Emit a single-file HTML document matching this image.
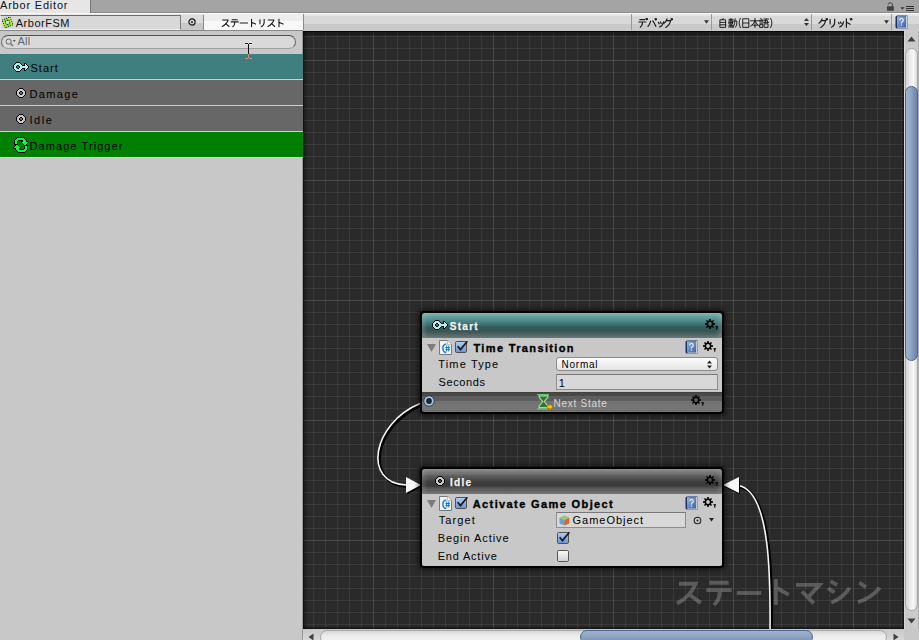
<!DOCTYPE html>
<html><head><meta charset="utf-8">
<style>
*{margin:0;padding:0;box-sizing:border-box}
html,body{width:919px;height:640px;overflow:hidden;background:#c8c8c8;font-family:"Liberation Sans",sans-serif;font-size:11px;color:#000}
.a{position:absolute}
svg{position:absolute;overflow:visible}
.t{position:absolute;white-space:nowrap;line-height:1}
</style></head><body>
<svg width="0" height="0" style="position:absolute">
<defs>
<symbol id="k_su" viewBox="0 0 100 100"><path d="M18 18H78Q68 55 14 88M52 56L88 88"/></symbol>
<symbol id="k_te" viewBox="0 0 100 100"><path d="M22 14H78M10 38H90M52 38Q52 72 28 92"/></symbol>
<symbol id="k_ch" viewBox="0 0 100 100"><path d="M8 50H92"/></symbol>
<symbol id="k_to" viewBox="0 0 100 100"><path d="M34 8V92M34 42L78 62"/></symbol>
<symbol id="k_ma" viewBox="0 0 100 100"><path d="M10 24H88Q72 52 50 68M40 48L72 88"/></symbol>
<symbol id="k_si" viewBox="0 0 100 100"><path d="M16 16L36 30M10 44L32 58M18 90Q66 74 90 22"/></symbol>
<symbol id="k_n" viewBox="0 0 100 100"><path d="M14 20L40 40M16 88Q66 74 90 24"/></symbol>
<symbol id="k_ri" viewBox="0 0 100 100"><path d="M26 14V58M72 10V45Q70 78 40 92"/></symbol>
<symbol id="k_de" viewBox="0 0 100 100"><path d="M18 16H68M8 40H80M46 40Q46 72 24 92M80 6L86 18M90 2L96 14"/></symbol>
<symbol id="k_ba" viewBox="0 0 100 100"><path d="M36 32Q30 62 10 84M58 28Q76 52 88 82M80 8L86 20M90 4L96 16"/></symbol>
<symbol id="k_xtu" viewBox="0 0 100 100"><path d="M24 44L32 58M44 40L52 54M76 38Q70 74 36 90"/></symbol>
<symbol id="k_gu" viewBox="0 0 100 100"><path d="M40 8Q34 34 10 52M34 26H76Q66 72 28 94M80 8L86 20M90 4L96 16"/></symbol>
<symbol id="k_do" viewBox="0 0 100 100"><path d="M34 8V92M34 42L72 62M72 8L78 20M84 4L90 16"/></symbol>
<symbol id="kj_ji" viewBox="0 0 100 100"><path d="M52 4L44 16M24 18H76V94H24ZM24 44H76M24 68H76"/></symbol>
<symbol id="kj_dou" viewBox="0 0 100 100"><path d="M10 14H50M30 6V90M14 28H46V60H14ZM14 44H46M10 74H50M6 90H54M56 30H90Q90 82 76 92M72 8Q72 66 50 94"/></symbol>
<symbol id="kj_po" viewBox="0 0 100 100"><path d="M34 2Q6 50 34 98"/></symbol>
<symbol id="kj_nichi" viewBox="0 0 100 100"><path d="M22 8H78V94H22ZM22 50H78"/></symbol>
<symbol id="kj_hon" viewBox="0 0 100 100"><path d="M6 28H94M50 4V96M50 30Q36 64 6 82M50 30Q64 64 94 82M28 72H72"/></symbol>
<symbol id="kj_go" viewBox="0 0 100 100"><path d="M14 8L30 14M6 24H42M10 38H38M10 52H38M12 66H38V94H12ZM50 10H94M70 10L62 40M56 26H86V42M48 44H96M56 58H90V94H56Z"/></symbol>
<symbol id="kj_pc" viewBox="0 0 100 100"><path d="M66 2Q94 50 66 98"/></symbol>

<linearGradient id="gchk" x1="0" y1="0" x2="0" y2="1"><stop offset="0" stop-color="#b4cdf0"/><stop offset="1" stop-color="#6a94d6"/></linearGradient>
<linearGradient id="gunchk" x1="0" y1="0" x2="0" y2="1"><stop offset="0" stop-color="#fafafa"/><stop offset="1" stop-color="#d0d0d0"/></linearGradient>
<symbol id="chk" viewBox="0 0 13 13"><rect x="0.5" y="0.5" width="11" height="11" rx="1.2" fill="url(#gchk)" stroke="#505050"/><path d="M2.6 5.2L5.5 8.6L12.4 0.2" fill="none" stroke="#151a22" stroke-width="1.7"/></symbol>
<symbol id="gear" viewBox="-6 -6 14 12"><g fill="#000"><path fill-rule="evenodd" d="M-3.4 0A3.4 3.4 0 1 0 3.4 0A3.4 3.4 0 1 0 -3.4 0ZM-1.9 0A1.9 1.9 0 1 1 1.9 0A1.9 1.9 0 1 1 -1.9 0Z"/><rect x="-0.8" y="-5" width="1.6" height="2.2" transform="rotate(0)"/><rect x="-0.8" y="-5" width="1.6" height="2.2" transform="rotate(45)"/><rect x="-0.8" y="-5" width="1.6" height="2.2" transform="rotate(90)"/><rect x="-0.8" y="-5" width="1.6" height="2.2" transform="rotate(135)"/><rect x="-0.8" y="-5" width="1.6" height="2.2" transform="rotate(180)"/><rect x="-0.8" y="-5" width="1.6" height="2.2" transform="rotate(225)"/><rect x="-0.8" y="-5" width="1.6" height="2.2" transform="rotate(270)"/><rect x="-0.8" y="-5" width="1.6" height="2.2" transform="rotate(315)"/><path d="M5 2.3H8.6L6.8 4.6Z"/><rect x="6.3" y="4" width="1" height="1.8"/></g></symbol>
<symbol id="csicon" viewBox="0 0 13 15"><path d="M0.5 0.5H8.7L12.5 4.3V14.5H0.5Z" fill="#eef3f8" stroke="#7a7a7a"/><path d="M8.5 0.5V4.5H12.5" fill="#fff" stroke="#9a9a9a" stroke-width="0.6"/><path d="M7.2 3.9A3.3 4.3 0 0 0 7.2 12.5" fill="none" stroke="#1b7cc2" stroke-width="1.5"/><path d="M6.5 7.5H11M6.5 9.5H11M7.7 5.5V11.5M9.7 5.5V11.5" stroke="#1b7cc2" stroke-width="1"/></symbol>
<linearGradient id="gbook" x1="0" y1="0" x2="1" y2="1"><stop offset="0" stop-color="#9ab8e4"/><stop offset="0.5" stop-color="#6a8cc4"/><stop offset="1" stop-color="#3e5f9c"/></linearGradient><symbol id="helpbook" viewBox="0 0 13 14"><path d="M0.5 2Q0.5 0.5 2.5 0.5H12.5V13.5H2.5Q0.5 13.5 0.5 12Z" fill="#1c3260"/><rect x="2" y="1.3" width="9.2" height="11.2" fill="url(#gbook)"/><path d="M11.2 1H12.3V13.2H2.5V12.5H11.2Z" fill="#e8ecf2"/><path d="M4.9 5.2A1.7 1.7 0 1 1 7.1 6.8Q6.5 7.2 6.5 8.6" fill="none" stroke="#f4f6fa" stroke-width="1.1"/><rect x="6" y="9.6" width="1.1" height="1.1" fill="#f4f6fa"/></symbol>
<symbol id="ic_state" viewBox="0 0 10 10"><rect x="3" y="0" width="4" height="1" fill="#000"/><rect x="2" y="1" width="1" height="1" fill="#000"/><rect x="3" y="1" width="4" height="1" fill="#c8c8c8"/><rect x="7" y="1" width="1" height="1" fill="#000"/><rect x="1" y="2" width="1" height="1" fill="#000"/><rect x="2" y="2" width="6" height="1" fill="#c8c8c8"/><rect x="8" y="2" width="1" height="1" fill="#000"/><rect x="0" y="3" width="1" height="1" fill="#000"/><rect x="1" y="3" width="3" height="1" fill="#c8c8c8"/><rect x="4" y="3" width="2" height="1" fill="#000"/><rect x="6" y="3" width="3" height="1" fill="#c8c8c8"/><rect x="9" y="3" width="1" height="1" fill="#000"/><rect x="0" y="4" width="1" height="1" fill="#000"/><rect x="1" y="4" width="2" height="1" fill="#c8c8c8"/><rect x="3" y="4" width="1" height="1" fill="#000"/><rect x="6" y="4" width="1" height="1" fill="#000"/><rect x="7" y="4" width="2" height="1" fill="#c8c8c8"/><rect x="9" y="4" width="1" height="1" fill="#000"/><rect x="0" y="5" width="1" height="1" fill="#000"/><rect x="1" y="5" width="2" height="1" fill="#c8c8c8"/><rect x="3" y="5" width="1" height="1" fill="#000"/><rect x="6" y="5" width="1" height="1" fill="#000"/><rect x="7" y="5" width="2" height="1" fill="#c8c8c8"/><rect x="9" y="5" width="1" height="1" fill="#000"/><rect x="0" y="6" width="1" height="1" fill="#000"/><rect x="1" y="6" width="3" height="1" fill="#c8c8c8"/><rect x="4" y="6" width="2" height="1" fill="#000"/><rect x="6" y="6" width="3" height="1" fill="#c8c8c8"/><rect x="9" y="6" width="1" height="1" fill="#000"/><rect x="1" y="7" width="1" height="1" fill="#000"/><rect x="2" y="7" width="6" height="1" fill="#c8c8c8"/><rect x="8" y="7" width="1" height="1" fill="#000"/><rect x="2" y="8" width="1" height="1" fill="#000"/><rect x="3" y="8" width="4" height="1" fill="#c8c8c8"/><rect x="7" y="8" width="1" height="1" fill="#000"/><rect x="3" y="9" width="4" height="1" fill="#000"/></symbol><symbol id="ic_key" viewBox="0 0 16 10"><rect x="3" y="0" width="4" height="1" fill="#000"/><rect x="2" y="1" width="1" height="1" fill="#000"/><rect x="3" y="1" width="4" height="1" fill="#aaf4f4"/><rect x="7" y="1" width="1" height="1" fill="#000"/><rect x="11" y="1" width="2" height="1" fill="#000"/><rect x="1" y="2" width="1" height="1" fill="#000"/><rect x="2" y="2" width="6" height="1" fill="#aaf4f4"/><rect x="8" y="2" width="1" height="1" fill="#000"/><rect x="11" y="2" width="1" height="1" fill="#000"/><rect x="12" y="2" width="1" height="1" fill="#aaf4f4"/><rect x="13" y="2" width="1" height="1" fill="#000"/><rect x="0" y="3" width="1" height="1" fill="#000"/><rect x="1" y="3" width="3" height="1" fill="#aaf4f4"/><rect x="4" y="3" width="2" height="1" fill="#000"/><rect x="6" y="3" width="3" height="1" fill="#aaf4f4"/><rect x="9" y="3" width="3" height="1" fill="#000"/><rect x="12" y="3" width="2" height="1" fill="#aaf4f4"/><rect x="14" y="3" width="1" height="1" fill="#000"/><rect x="0" y="4" width="1" height="1" fill="#000"/><rect x="1" y="4" width="2" height="1" fill="#aaf4f4"/><rect x="3" y="4" width="1" height="1" fill="#000"/><rect x="6" y="4" width="1" height="1" fill="#000"/><rect x="7" y="4" width="8" height="1" fill="#aaf4f4"/><rect x="15" y="4" width="1" height="1" fill="#000"/><rect x="0" y="5" width="1" height="1" fill="#000"/><rect x="1" y="5" width="2" height="1" fill="#aaf4f4"/><rect x="3" y="5" width="1" height="1" fill="#000"/><rect x="6" y="5" width="1" height="1" fill="#000"/><rect x="7" y="5" width="8" height="1" fill="#aaf4f4"/><rect x="15" y="5" width="1" height="1" fill="#000"/><rect x="0" y="6" width="1" height="1" fill="#000"/><rect x="1" y="6" width="3" height="1" fill="#aaf4f4"/><rect x="4" y="6" width="2" height="1" fill="#000"/><rect x="6" y="6" width="3" height="1" fill="#aaf4f4"/><rect x="9" y="6" width="3" height="1" fill="#000"/><rect x="12" y="6" width="2" height="1" fill="#aaf4f4"/><rect x="14" y="6" width="1" height="1" fill="#000"/><rect x="1" y="7" width="1" height="1" fill="#000"/><rect x="2" y="7" width="6" height="1" fill="#aaf4f4"/><rect x="8" y="7" width="1" height="1" fill="#000"/><rect x="11" y="7" width="1" height="1" fill="#000"/><rect x="12" y="7" width="1" height="1" fill="#aaf4f4"/><rect x="13" y="7" width="1" height="1" fill="#000"/><rect x="2" y="8" width="1" height="1" fill="#000"/><rect x="3" y="8" width="4" height="1" fill="#aaf4f4"/><rect x="7" y="8" width="1" height="1" fill="#000"/><rect x="11" y="8" width="2" height="1" fill="#000"/><rect x="3" y="9" width="4" height="1" fill="#000"/></symbol><symbol id="ic_trig" viewBox="0 0 16 16"><rect x="4" y="0" width="7" height="1" fill="#000"/><rect x="3" y="1" width="1" height="1" fill="#000"/><rect x="4" y="1" width="7" height="1" fill="#00ff38"/><rect x="11" y="1" width="1" height="1" fill="#000"/><rect x="2" y="2" width="1" height="1" fill="#000"/><rect x="3" y="2" width="9" height="1" fill="#00ff38"/><rect x="12" y="2" width="1" height="1" fill="#000"/><rect x="1" y="3" width="1" height="1" fill="#000"/><rect x="2" y="3" width="3" height="1" fill="#00ff38"/><rect x="5" y="3" width="5" height="1" fill="#000"/><rect x="10" y="3" width="3" height="1" fill="#00ff38"/><rect x="13" y="3" width="1" height="1" fill="#000"/><rect x="1" y="4" width="1" height="1" fill="#000"/><rect x="2" y="4" width="2" height="1" fill="#00ff38"/><rect x="4" y="4" width="1" height="1" fill="#000"/><rect x="8" y="4" width="2" height="1" fill="#000"/><rect x="10" y="4" width="3" height="1" fill="#00ff38"/><rect x="13" y="4" width="2" height="1" fill="#000"/><rect x="1" y="5" width="1" height="1" fill="#000"/><rect x="2" y="5" width="2" height="1" fill="#00ff38"/><rect x="4" y="5" width="1" height="1" fill="#000"/><rect x="8" y="5" width="1" height="1" fill="#000"/><rect x="9" y="5" width="6" height="1" fill="#00ff38"/><rect x="15" y="5" width="1" height="1" fill="#000"/><rect x="1" y="6" width="1" height="1" fill="#000"/><rect x="2" y="6" width="2" height="1" fill="#00ff38"/><rect x="4" y="6" width="1" height="1" fill="#000"/><rect x="9" y="6" width="1" height="1" fill="#000"/><rect x="10" y="6" width="4" height="1" fill="#00ff38"/><rect x="14" y="6" width="1" height="1" fill="#000"/><rect x="1" y="7" width="4" height="1" fill="#000"/><rect x="10" y="7" width="1" height="1" fill="#000"/><rect x="11" y="7" width="2" height="1" fill="#00ff38"/><rect x="13" y="7" width="1" height="1" fill="#000"/><rect x="2" y="8" width="1" height="1" fill="#000"/><rect x="3" y="8" width="2" height="1" fill="#00ff38"/><rect x="5" y="8" width="1" height="1" fill="#000"/><rect x="11" y="8" width="4" height="1" fill="#000"/><rect x="1" y="9" width="1" height="1" fill="#000"/><rect x="2" y="9" width="4" height="1" fill="#00ff38"/><rect x="6" y="9" width="1" height="1" fill="#000"/><rect x="11" y="9" width="1" height="1" fill="#000"/><rect x="12" y="9" width="2" height="1" fill="#00ff38"/><rect x="14" y="9" width="1" height="1" fill="#000"/><rect x="0" y="10" width="1" height="1" fill="#000"/><rect x="1" y="10" width="6" height="1" fill="#00ff38"/><rect x="7" y="10" width="1" height="1" fill="#000"/><rect x="11" y="10" width="1" height="1" fill="#000"/><rect x="12" y="10" width="2" height="1" fill="#00ff38"/><rect x="14" y="10" width="1" height="1" fill="#000"/><rect x="1" y="11" width="2" height="1" fill="#000"/><rect x="3" y="11" width="3" height="1" fill="#00ff38"/><rect x="6" y="11" width="2" height="1" fill="#000"/><rect x="11" y="11" width="1" height="1" fill="#000"/><rect x="12" y="11" width="2" height="1" fill="#00ff38"/><rect x="14" y="11" width="1" height="1" fill="#000"/><rect x="2" y="12" width="1" height="1" fill="#000"/><rect x="3" y="12" width="3" height="1" fill="#00ff38"/><rect x="6" y="12" width="5" height="1" fill="#000"/><rect x="11" y="12" width="3" height="1" fill="#00ff38"/><rect x="14" y="12" width="1" height="1" fill="#000"/><rect x="3" y="13" width="1" height="1" fill="#000"/><rect x="4" y="13" width="9" height="1" fill="#00ff38"/><rect x="13" y="13" width="1" height="1" fill="#000"/><rect x="4" y="14" width="1" height="1" fill="#000"/><rect x="5" y="14" width="7" height="1" fill="#00ff38"/><rect x="12" y="14" width="1" height="1" fill="#000"/><rect x="5" y="15" width="7" height="1" fill="#000"/></symbol></defs>
</svg>

<!-- title bar -->
<div class="a" style="left:0;top:0;width:919px;height:13px;background:#a4a4a4;border-bottom:1px solid #8a8a8a"></div>
<div class="a" style="left:0;top:0;width:91px;height:13px;background:#e6e6e6;border-right:1px solid #777"></div>
<div class="t" style="left:0px;top:0.2px;font-size:11px;letter-spacing:0.8px;color:#111">Arbor Editor</div>
<div class="a" style="left:0;top:13px;width:919px;height:1px;background:#fafafa"></div>

<!-- toolbar -->
<div class="a" style="left:0;top:14px;width:919px;height:17px;background:linear-gradient(#e6e6e6 0,#e6e6e6 2px,#d9d9d9 2px,#d9d9d9 10px,#c9c9c9 10px)"></div>

<!-- object field -->
<div class="a" style="left:0;top:30px;width:303px;height:1px;background:#8a8a8a"></div>
<div class="a" style="left:0;top:15px;width:181px;height:15px;background:#d8d8d8;border-top:1px solid #6c6c6c;border-bottom:1px solid #efefef;border-left:1px solid #e8e8e8;border-right:1px solid #7a7a7a"></div>
<svg style="left:0px;top:14px" width="16" height="16" viewBox="0 0 16 16"><defs><linearGradient id="gfsm" x1="0" y1="0" x2="1" y2="0"><stop offset="0" stop-color="#f0f000"/><stop offset="0.45" stop-color="#20ff40"/><stop offset="1" stop-color="#e8ff00"/></linearGradient></defs><g transform="rotate(-22 7.6 8.4)"><path fill-rule="evenodd" d="M3.4 4.2H11.8V12.6H3.4ZM5.6 6.4H9.6V10.4H5.6Z" fill="url(#gfsm)" stroke="#111" stroke-width="0.8" stroke-dasharray="1.2 0.9"/></g></svg>
<div class="t" style="left:15.7px;top:17.8px;font-size:11px;letter-spacing:0.53px;color:#111">ArborFSM</div>
<!-- picker btn -->
<div class="a" style="left:181px;top:15px;width:23px;height:15px;background:linear-gradient(#dcdcdc 0,#dcdcdc 8px,#c8c8c8 8px);border-right:1px solid #8a8a8a"></div>
<svg style="left:188px;top:18px" width="8" height="8" viewBox="0 0 8 8"><circle cx="4" cy="4" r="3.1" fill="none" stroke="#111" stroke-width="1.2"/><circle cx="4" cy="4" r="0.9" fill="#111"/></svg>
<!-- tab -->
<div class="a" style="left:204px;top:14px;width:100px;height:16px;background:linear-gradient(#ededed 0,#ededed 7px,#f8f8f8 7px);border-right:1px solid #8a8a8a"></div>
<svg style="left:221px;top:18px" width="64" height="10" viewBox="0 0 700 100" fill="none" stroke="#1a1a1a" stroke-width="12" stroke-linecap="round" stroke-linejoin="round">
<use href="#k_su" x="0" width="100" height="100"/><use href="#k_te" x="100" width="100" height="100"/><use href="#k_ch" x="200" width="100" height="100"/><use href="#k_to" x="300" width="100" height="100"/><use href="#k_ri" x="400" width="100" height="100"/><use href="#k_su" x="500" width="100" height="100"/><use href="#k_to" x="600" width="100" height="100"/>
</svg>
<!-- dropdown separators -->
<div class="a" style="left:631px;top:14px;width:1px;height:16px;background:#999"></div>
<div class="a" style="left:711px;top:14px;width:1px;height:16px;background:#999"></div>
<div class="a" style="left:811px;top:14px;width:1px;height:16px;background:#999"></div>
<div class="a" style="left:891px;top:14px;width:1px;height:16px;background:#999"></div>
<svg style="left:638px;top:18px" width="36" height="10" viewBox="0 0 360 100" fill="none" stroke="#1a1a1a" stroke-width="12" stroke-linecap="round" stroke-linejoin="round">
<use href="#k_de" x="0" width="100" height="100"/><use href="#k_ba" x="90" width="100" height="100"/><use href="#k_xtu" x="180" width="100" height="100"/><use href="#k_gu" x="250" width="100" height="100"/>
</svg>
<svg style="left:703.5px;top:20px" width="5" height="4" viewBox="0 0 6 4"><path d="M0 0H6L3 4Z" fill="#333"/></svg>
<svg style="left:718px;top:18px" width="52" height="10" viewBox="0 0 520 100" fill="none" stroke="#111" stroke-width="9" stroke-linecap="square" stroke-linejoin="miter">
<use href="#kj_ji" x="0" width="100" height="100"/><use href="#kj_dou" x="100" width="100" height="100"/><use href="#kj_po" x="190" width="100" height="100"/><use href="#kj_nichi" x="230" width="100" height="100"/><use href="#kj_hon" x="320" width="100" height="100"/><use href="#kj_go" x="410" width="100" height="100"/><use href="#kj_pc" x="460" width="100" height="100"/>
</svg>
<svg style="left:804px;top:17px" width="5" height="10" viewBox="0 0 5 10"><path d="M0 4H5L2.5 1ZM0 6H5L2.5 9Z" fill="#333"/></svg>
<svg style="left:818px;top:18px" width="36" height="10" viewBox="0 0 360 100" fill="none" stroke="#1a1a1a" stroke-width="12" stroke-linecap="round" stroke-linejoin="round">
<use href="#k_gu" x="0" width="100" height="100"/><use href="#k_ri" x="95" width="100" height="100"/><use href="#k_xtu" x="180" width="100" height="100"/><use href="#k_do" x="250" width="100" height="100"/>
</svg>
<svg style="left:883.5px;top:20px" width="5" height="4" viewBox="0 0 6 4"><path d="M0 0H6L3 4Z" fill="#333"/></svg>
<!-- book icon toolbar -->
<svg style="left:895px;top:15px" width="13" height="14" viewBox="0 0 13 14"><use href="#helpbook"/></svg>
<!-- lock & menu -->
<svg style="left:886px;top:1px" width="9" height="11" viewBox="0 0 9 11"><rect x="1" y="5.2" width="6.8" height="4.6" fill="#444"/><path d="M2.2 3.6A2.2 2.2 0 0 1 6.4 3V5.4" fill="none" stroke="#444" stroke-width="1"/></svg>
<svg style="left:900px;top:5px" width="15" height="7" viewBox="0 0 15 7" shape-rendering="crispEdges"><path d="M0.3 2.2H4.6L2.45 4.7Z" fill="#3a3a3a" shape-rendering="auto"/><rect x="6" y="1" width="8" height="1" fill="#333"/><rect x="6" y="3" width="8" height="1" fill="#333"/><rect x="6" y="5" width="8" height="1" fill="#333"/></svg>

<!-- left panel -->
<div class="a" style="left:0;top:31px;width:303px;height:609px;background:#c8c8c8"></div><div class="a" style="left:302px;top:31px;width:1px;height:609px;background:#9a9a9a"></div>
<div class="a" style="left:1px;top:35px;width:295px;height:14px;border-radius:7px;background:#d9d9d9;border:1px solid #6a6a6a;border-top-color:#505050;border-bottom-color:#a0a0a0"></div>
<svg style="left:5px;top:38px" width="12" height="9" viewBox="0 0 12 9"><circle cx="3.6" cy="3.6" r="2.6" fill="none" stroke="#666" stroke-width="1"/><path d="M5.5 5.5L8 8" stroke="#666" stroke-width="1.2"/><path d="M7.5 2H11L9.25 4Z" fill="#666"/></svg>
<div class="t" style="left:17.4px;top:36.2px;font-size:11px;letter-spacing:0.3px;color:#666">All</div>
<!-- list items -->
<div class="a" style="left:0;top:54px;width:303px;height:25px;background:#3f7f7f"></div>
<div class="a" style="left:0;top:79px;width:303px;height:1px;background:#cfcfcf"></div>
<div class="a" style="left:0;top:80px;width:303px;height:25px;background:#676767"></div>
<div class="a" style="left:0;top:105px;width:303px;height:1px;background:#cfcfcf"></div>
<div class="a" style="left:0;top:106px;width:303px;height:25px;background:#676767"></div>
<div class="a" style="left:0;top:131px;width:303px;height:1px;background:#cfcfcf"></div>
<div class="a" style="left:0;top:132px;width:303px;height:25px;background:#008000"></div>
<div class="a" style="left:0;top:157px;width:303px;height:1px;background:#cfcfcf"></div>
<!-- key icon -->
<svg style="left:13px;top:62px" width="16" height="10" viewBox="0 0 16 10" shape-rendering="crispEdges"><use href="#ic_key"/></svg>
<div class="t" style="left:30.5px;top:63px;font-size:11px;letter-spacing:1.03px;color:#000">Start</div>
<svg style="left:16px;top:88px" width="10" height="10" viewBox="0 0 10 10" shape-rendering="crispEdges"><use href="#ic_state"/></svg>
<div class="t" style="left:29.4px;top:89.4px;font-size:11px;letter-spacing:1.38px;color:#000">Damage</div>
<svg style="left:16px;top:114px" width="10" height="10" viewBox="0 0 10 10" shape-rendering="crispEdges"><use href="#ic_state"/></svg>
<div class="t" style="left:29.5px;top:115.4px;font-size:11px;letter-spacing:1.53px;color:#000">Idle</div>
<svg style="left:13px;top:137px" width="16" height="16" viewBox="0 0 16 16" shape-rendering="crispEdges"><use href="#ic_trig"/></svg>
<div class="t" style="left:29.5px;top:140.8px;font-size:11px;letter-spacing:1.08px;color:#000">Damage Trigger</div>
<!-- text cursor -->
<svg style="left:244px;top:42px" width="10" height="18" viewBox="0 0 10 18" shape-rendering="crispEdges"><path d="M1 1.5H4M5 1.5H8" stroke="#fff" stroke-opacity="0.5" stroke-width="3"/><rect x="1" y="1" width="3" height="1" fill="#111"/><rect x="5" y="1" width="3" height="1" fill="#111"/><rect x="4" y="2" width="1" height="10" fill="#111"/><rect x="4" y="12" width="1" height="4" fill="#e08a80"/><rect x="1" y="16" width="3" height="1" fill="#e08a80"/><rect x="5" y="16" width="3" height="1" fill="#e08a80"/></svg>

<!-- canvas -->
<div class="a" id="cv" style="left:303px;top:31px;width:601px;height:598px;background-color:#2a2a2a;
background-image:linear-gradient(90deg,rgba(255,255,255,0.09) 0,rgba(255,255,255,0.09) 1px,transparent 1px),linear-gradient(rgba(255,255,255,0.09) 0,rgba(255,255,255,0.09) 1px,transparent 1px),linear-gradient(90deg,rgba(255,255,255,0.065) 0,rgba(255,255,255,0.065) 1px,transparent 1px),linear-gradient(rgba(255,255,255,0.065) 0,rgba(255,255,255,0.065) 1px,transparent 1px);
background-size:120px 598px,601px 120px,12px 598px,601px 12px;background-position:70px 0,0 29px,10px 0,0 5px;overflow:hidden">
<div class="a" style="left:0;top:0;width:601px;height:5px;background:linear-gradient(#050505 0,#050505 1px,rgba(0,0,0,0.38) 1px,rgba(0,0,0,0.32) 4px,rgba(0,0,0,0) 5px)"></div>
<div class="a" style="left:0;top:0;width:4px;height:598px;background:linear-gradient(90deg,rgba(0,0,0,0.6) 0,rgba(0,0,0,0.6) 1px,rgba(0,0,0,0.3) 1px,rgba(0,0,0,0.15) 4px)"></div>
<div class="a" style="right:0;top:0;width:2px;height:598px;background:linear-gradient(90deg,rgba(0,0,0,0.2),rgba(0,0,0,0.5))"></div>
<div class="a" style="left:0;bottom:0;width:601px;height:2px;background:linear-gradient(rgba(0,0,0,0.25),rgba(0,0,0,0.55))"></div>
</div>

<!-- v scrollbar -->
<div class="a" style="left:904px;top:31px;width:15px;height:598px;background:linear-gradient(90deg,#d8d8d8 0,#d8d8d8 1px,#c8c8c8 1px,#cccccc 14px,#b0b0b0 14px)"></div>
<svg style="left:907px;top:36px" width="9" height="6" viewBox="0 0 9 6"><path d="M0.5 5.5H8.5L4.5 0.5Z" fill="#404040"/></svg>
<div class="a" style="left:905px;top:48px;width:13px;height:563px;border-radius:7px;background:linear-gradient(90deg,#d4d4d4,#ececec 40%,#f8f8f8 70%,#d6d6d6);border:1px solid #a8a8a8"></div>
<div class="a" style="left:905px;top:86px;width:13px;height:275px;border-radius:7px;background:linear-gradient(90deg,#a3b2cc,#94a6c4 40%,#7c93b7 70%,#6a84ad);border:1px solid #4c6590"></div>
<svg style="left:907px;top:618px" width="9" height="6" viewBox="0 0 9 6"><path d="M0.5 0.5H8.5L4.5 5.5Z" fill="#404040"/></svg>
<!-- h scrollbar -->
<div class="a" style="left:303px;top:629px;width:601px;height:11px;background:linear-gradient(#c8c8c8,#d8d8d8)"></div>
<svg style="left:308px;top:633px" width="6" height="8" viewBox="0 0 6 8"><path d="M5.5 0.5V7.5L0.5 4Z" fill="#404040"/></svg>
<div class="a" style="left:320px;top:630px;width:567px;height:14px;border-radius:7px;background:linear-gradient(#d8d8d8,#ececec 40%,#f4f4f4);border:1px solid #a8a8a8"></div>
<div class="a" style="left:580px;top:630px;width:233px;height:14px;border-radius:7px;background:linear-gradient(#a2b2cc,#8fa2c2 50%,#758db4);border:1px solid #4c6590"></div>
<svg style="left:893px;top:633px" width="6" height="8" viewBox="0 0 6 8"><path d="M0.5 0.5V7.5L5.5 4Z" fill="#404040"/></svg>
<div class="a" style="left:904px;top:629px;width:15px;height:11px;background:#c8c8c8"></div>


<!-- connections -->
<svg style="left:303px;top:31px;overflow:hidden" width="601" height="598" viewBox="303 31 601 598">
<g fill="none" stroke="#fff" opacity="0.225" stroke-width="3.9" stroke-linecap="butt" stroke-linejoin="miter">
<path d="M679 583.8H695.4Q691 596 677 603.5M689.4 594.7L700.8 602.8"/>
<path d="M709.5 582.7H728.6M706.3 590.1H731.6M719.8 590.1Q720 600 713.9 605"/>
<path d="M736.7 593H761.2"/>
<path d="M775.8 579.2V604.7M777 588L788.8 594.9"/>
<path d="M796 584.9H819.5L808 597.5M802 591.5L813.8 603.4"/>
<path d="M830.6 581.2L837.1 585.1M828 588.4L834.5 592.3M831.3 602.7Q843 598 849.6 587.7"/>
<path d="M859.3 582.5L865.9 587.1M858 602Q872 598 879.6 587.7"/>
</g>

<path d="M420 403.5C372 423.5 362 483 406 485" fill="none" stroke="#000" stroke-width="3" transform="translate(1.5 1.5)"/>
<path d="M420 403.5C372 423.5 362 483 406 485" fill="none" stroke="#f4f4f4" stroke-width="1.6"/>
<path d="M406 477L421 485L406 493Z" fill="#000" transform="translate(1 1.5)"/>
<path d="M406 477L421 485L406 493Z" fill="#f8f8f8"/>
<path d="M738 485.5C774 490.5 770 600 770 640" fill="none" stroke="#000" stroke-width="3" transform="translate(1.5 1.5)"/>
<path d="M738 485.5C774 490.5 770 600 770 640" fill="none" stroke="#f4f4f4" stroke-width="1.6"/>
<path d="M739 477L723 485L739 493Z" fill="#000" transform="translate(1 1.5)"/>
<path d="M739 477L723 485L739 493Z" fill="#f8f8f8"/>
</svg>

<!-- Start node -->
<div class="a" style="left:420px;top:311px;width:304px;height:103px;background:#000;border-radius:4px;box-shadow:0 0 4px 2px rgba(0,0,0,0.5)"></div>
<div class="a" style="left:422px;top:313px;width:300px;height:25px;border-radius:3px 3px 0 0;box-shadow:inset 4px 0 4px -1px rgba(170,200,200,0.28),inset -4px 0 4px -1px rgba(170,200,200,0.28);background:linear-gradient(#80bcbc 0,#76b0b0 1px,#6aa4a4 3px,#609898 5px,#4c8686 8px,#447a7a 10px,#3c6c6c 12px,#345a5a 14px,#345656 18px,#485c5c 20px,#586868 22px,#5e6c6c 25px)"></div>
<div class="a" style="left:422px;top:338px;width:300px;height:54px;background:#c8c8c8"></div>
<div class="a" style="left:422px;top:392px;width:300px;height:20px;border-radius:0 0 2px 2px;background:linear-gradient(#404040 0,#404040 1px,#484848 1px,#4a4a4a 4px,#5e5e5e 4.5px,#5e5e5e 9px,#727272 9.5px,#767676 18px,#6c6c6c 18px,#6c6c6c 19px,#787878 19px)"></div>
<svg style="left:432px;top:320px" width="16" height="10" viewBox="0 0 16 10" shape-rendering="crispEdges"><use href="#ic_key"/></svg>
<div class="t" style="left:449.7px;top:322px;font-size:10px;letter-spacing:1.3px;color:#f4f4f4;font-weight:bold;-webkit-text-stroke:0.25px #f4f4f4">Start</div>
<svg style="left:704px;top:318px" width="14" height="12" viewBox="0 0 14 12"><use href="#gear"/></svg>
<!-- component header -->
<svg style="left:427px;top:344px" width="9" height="8" viewBox="0 0 9 8"><path d="M0 0H9L4.5 8Z" fill="#7c7c7c"/></svg>
<svg style="left:439px;top:340px" width="13" height="15" viewBox="0 0 13 15"><use href="#csicon"/></svg>
<svg style="left:455px;top:341px" width="13" height="13" viewBox="0 0 13 13"><use href="#chk"/></svg>
<div class="t" style="left:473.5px;top:343px;font-size:11px;letter-spacing:1.35px;color:#000;font-weight:bold;-webkit-text-stroke:0.35px #000">Time Transition</div>
<svg style="left:685px;top:340px" width="13" height="14" viewBox="0 0 13 14"><use href="#helpbook"/></svg>
<svg style="left:702px;top:340px" width="14" height="12" viewBox="0 0 14 12"><use href="#gear"/></svg>
<div class="t" style="left:438.3px;top:358.9px;font-size:11px;letter-spacing:1.14px;color:#000">Time Type</div>
<div class="t" style="left:438.5px;top:376.5px;font-size:11px;letter-spacing:0.63px;color:#000">Seconds</div>
<div class="a" style="left:556px;top:357px;width:162px;height:14px;border-radius:3px;background:linear-gradient(#fcfcfc,#e4e4e4);border:1px solid #8a8a8a"></div>
<div class="t" style="left:561.5px;top:359.6px;font-size:10px;letter-spacing:0.76px;color:#000">Normal</div>
<svg style="left:707px;top:360px" width="5" height="9" viewBox="0 0 5 9"><path d="M0 3.5H5L2.5 0.5ZM0 5.5H5L2.5 8.5Z" fill="#222"/></svg>
<div class="a" style="left:556px;top:374px;width:162px;height:16px;background:#d8d8d8;border:1px solid #8e8e8e;border-top-color:#777"></div>
<div class="t" style="left:558.8px;top:377.9px;font-size:11px;letter-spacing:0px;color:#000">1</div>
<svg style="left:423px;top:395px" width="12" height="12" viewBox="0 0 12 12"><circle cx="6" cy="6" r="5.2" fill="#a6c4ec" stroke="#2a2a2a" stroke-width="0.8"/><circle cx="6" cy="6" r="2.9" fill="#1c2730"/></svg>
<svg style="left:536px;top:393px" width="18" height="18" viewBox="0 0 18 18"><rect x="1" y="1" width="12" height="1.3" fill="#6cc46c"/><rect x="1" y="15.3" width="11" height="1.3" fill="#6cc46c"/><path d="M3.2 2.8H11.8V4.3L8.3 8.6L11.8 12.9V14.7H3.2V12.9L6.7 8.6L3.2 4.3Z" fill="#3c6e3c" stroke="#92e496" stroke-width="1.2"/><path d="M11 12.2H13.5V10.5L17 13.8L13.5 17.1V15.4H11Z" fill="#f4c400" stroke="#9a7000" stroke-width="0.6"/></svg>
<div class="t" style="left:553.6px;top:399.1px;font-size:10px;letter-spacing:0.72px;color:#d8d8d8">Next State</div>
<svg style="left:690px;top:394px" width="14" height="12" viewBox="0 0 14 12"><use href="#gear"/></svg>

<!-- Idle node -->
<div class="a" style="left:420px;top:467px;width:304px;height:101px;background:#000;border-radius:4px;box-shadow:0 0 4px 2px rgba(0,0,0,0.5)"></div>
<div class="a" style="left:422px;top:469px;width:300px;height:25px;border-radius:3px 3px 0 0;box-shadow:inset 4px 0 4px -1px rgba(170,170,170,0.28),inset -4px 0 4px -1px rgba(170,170,170,0.28);background:linear-gradient(#8c8c8c 0,#838383 1.5px,#747474 4.5px,#5e5e5e 7px,#4e4e4e 10px,#3e3e3e 13px,#3a3a3a 16.5px,#4a4a4a 18px,#5a5a5a 20px,#6a6a6a 23px,#6e6e6e 25px)"></div>
<div class="a" style="left:422px;top:494px;width:300px;height:72px;border-radius:0 0 2px 2px;background:#c8c8c8"></div>
<svg style="left:435px;top:476px" width="10" height="10" viewBox="0 0 10 10" shape-rendering="crispEdges"><use href="#ic_state"/></svg>
<div class="t" style="left:449.9px;top:477.9px;font-size:10px;letter-spacing:1.3px;color:#f4f4f4;font-weight:bold;-webkit-text-stroke:0.25px #f4f4f4">Idle</div>
<svg style="left:704px;top:474px" width="14" height="12" viewBox="0 0 14 12"><use href="#gear"/></svg>
<svg style="left:427px;top:500px" width="9" height="8" viewBox="0 0 9 8"><path d="M0 0H9L4.5 8Z" fill="#7c7c7c"/></svg>
<svg style="left:439px;top:496px" width="13" height="15" viewBox="0 0 13 15"><use href="#csicon"/></svg>
<svg style="left:455px;top:497px" width="13" height="13" viewBox="0 0 13 13"><use href="#chk"/></svg>
<div class="t" style="left:472.8px;top:498.8px;font-size:11px;letter-spacing:1.38px;color:#000;font-weight:bold;-webkit-text-stroke:0.35px #000">Activate Game Object</div>
<svg style="left:685px;top:496px" width="13" height="14" viewBox="0 0 13 14"><use href="#helpbook"/></svg>
<svg style="left:702px;top:496px" width="14" height="12" viewBox="0 0 14 12"><use href="#gear"/></svg>
<div class="t" style="left:438.7px;top:515.3px;font-size:11px;letter-spacing:1.1px;color:#000">Target</div>
<div class="t" style="left:437.7px;top:533.2px;font-size:11px;letter-spacing:0.95px;color:#000">Begin Active</div>
<div class="t" style="left:437.7px;top:550.9px;font-size:11px;letter-spacing:0.8px;color:#000">End Active</div>
<div class="a" style="left:556px;top:512px;width:130px;height:16px;background:#d8d8d8;border:1px solid #8e8e8e;border-top-color:#777"></div>
<svg style="left:559px;top:515px" width="11" height="11" viewBox="0 0 11 11"><path d="M5.5 0.5L10.5 3V8.5L5.5 10.5L0.5 8.5V3Z" fill="#000" fill-opacity="0.3"/><path d="M5.5 1L10 3.2L5.5 5.3L1 3.2Z" fill="#9ad060"/><path d="M1 3.2L5.5 5.3V10.3L1 8.3Z" fill="#5aa8e0"/><path d="M10 3.2L5.5 5.3V10.3L10 8.3Z" fill="#e8602a"/></svg>
<div class="t" style="left:572.6px;top:514.8px;font-size:11px;letter-spacing:0.96px;color:#000">GameObject</div>
<svg style="left:693px;top:516px" width="9" height="9" viewBox="0 0 9 9"><circle cx="4.5" cy="4.5" r="3.3" fill="none" stroke="#222" stroke-width="1.1"/><circle cx="4.5" cy="4.5" r="1" fill="#222"/></svg>
<svg style="left:709px;top:518px" width="5" height="4" viewBox="0 0 5 4"><path d="M0 0H5L2.5 3.5Z" fill="#222"/></svg>
<svg style="left:557px;top:532px" width="13" height="13" viewBox="0 0 13 13"><use href="#chk"/></svg>
<svg style="left:557px;top:550px" width="13" height="13" viewBox="0 0 13 13"><rect x="0.5" y="0.5" width="11" height="11" rx="1.2" fill="url(#gunchk)" stroke="#555"/></svg>

</body></html>
